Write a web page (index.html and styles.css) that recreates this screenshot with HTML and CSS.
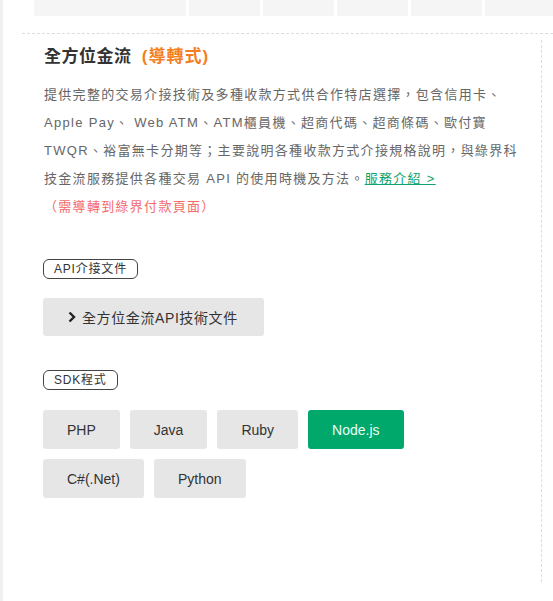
FILE: index.html
```html
<!DOCTYPE html>
<html lang="zh-Hant">

<head>
  <meta charset="UTF-8" />
  <title>全方位金流</title>
  <link rel="stylesheet" href="styles.css">
</head>

<body>
  <div class="page">
    <!-- 上方頁籤 -->
    <div class="tabs">
      <div class="tab tab-first"></div>
      <div class="tab"></div>
      <div class="tab"></div>
      <div class="tab"></div>
      <div class="tab"></div>
      <div class="tab tab-last"></div>
    </div>

    <div class="section">
      <div class="content">
        <h3 class="title">全方位金流 <span class="sub">(導轉式)</span></h3>
        <p class="desc">
          提供完整的交易介接技術及多種收款方式供合作特店選擇，包含信用卡、<br>
          Apple Pay、 Web ATM、ATM櫃員機、超商代碼、超商條碼、歐付寶<br>
          TWQR、裕富無卡分期等；主要說明各種收款方式介接規格說明，與綠界科<br>
          技金流服務提供各種交易 API 的使用時機及方法。<a href="#" class="more">服務介紹 &gt;</a><br>
          <span class="note">（需導轉到綠界付款頁面）</span>
        </p>

        <!-- API 文件 -->
        <div class="group group-api">
          <span class="tag">API介接文件</span>
          <div class="btns">
            <a href="#" class="btn btn-doc">
              <svg class="chevron" width="8" height="12" viewBox="0 0 8 12">
                <path d="M1.5 1.5 L6 6 L1.5 10.5" fill="none" stroke="#222" stroke-width="2.4" />
              </svg>
              全方位金流API技術文件
            </a>
          </div>
        </div>

        <!-- SDK -->
        <div class="group group-sdk">
          <span class="tag">SDK程式</span>
          <div class="btns">
            <a href="#" class="btn">PHP</a>
            <a href="#" class="btn">Java</a>
            <a href="#" class="btn">Ruby</a>
            <a href="#" class="btn active">Node.js</a>
            <a href="#" class="btn">C#(.Net)</a>
            <a href="#" class="btn">Python</a>
          </div>
        </div>
      </div>
    </div>
  </div>
</body>

</html>
```

FILE: styles.css
```css
body {
  margin: 0;
  padding: 0;
  background-color: #fff;
  font-family: "Liberation Sans", "Noto Sans CJK TC", sans-serif;
  color: #333;
}

.page {
  min-height: 601px;
  border-left: 3px solid #f0f0f0;
  overflow: hidden;
}

.tabs {
  display: flex;
  gap: 3px;
  height: 16px;
  margin-left: 31px;
}

.tab {
  flex: none;
  width: 71px;
  background-color: #f5f5f5;
}

.tab-first {
  width: 152px;
}

.tab-last {
  width: 90px;
}

.section {
  margin: 17px 0 0 19px;
  border-top: 1px dashed #dcdcdc;
}

.content {
  height: 542px;
  margin: 6px 11px 0 0;
  padding: 5px 0 0 22px;
  box-sizing: border-box;
  border-right: 1px dashed #dcdcdc;
}

.title {
  margin: 0;
  font-size: 17px;
  line-height: 24px;
  font-weight: bold;
  color: #333;
  letter-spacing: 0.5px;
}

.title .sub {
  margin-left: 5px;
  color: #f47f22;
  letter-spacing: 1px;
}

.desc {
  margin: 12px 0 0;
  font-size: 13px;
  line-height: 28px;
  letter-spacing: 1.3px;
  color: #666;
  white-space: nowrap;
}

.desc .more {
  color: #0fa36d;
  text-decoration: underline;
}

.desc .note {
  color: #f36b6b;
}

.group-api {
  margin-top: 38px;
}

.group-sdk {
  margin-top: 34px;
}

.tag {
  display: inline-block;
  height: 20px;
  margin-left: -1px;
  padding: 0 10px;
  box-sizing: border-box;
  border: 1px solid #444;
  border-radius: 6px;
  font-size: 12px;
  line-height: 18px;
  letter-spacing: 0.8px;
  color: #333;
}

.btns {
  display: flex;
  flex-wrap: wrap;
  gap: 10px;
  margin: 19px 0 0 -1px;
  width: 380px;
}

.group-sdk .btns {
  margin-top: 20px;
}

.btn {
  display: flex;
  align-items: center;
  height: 39px;
  padding: 0 24px;
  border-radius: 3px;
  background-color: #e6e6e6;
  font-size: 14px;
  color: #333;
  text-decoration: none;
}

.btn-doc {
  height: 38px;
  padding: 0 26px 0 25px;
  letter-spacing: 0.6px;
}

.chevron {
  margin-right: 6px;
}

.btn.active {
  background-color: #00a86b;
  color: #eafff5;
}
```
